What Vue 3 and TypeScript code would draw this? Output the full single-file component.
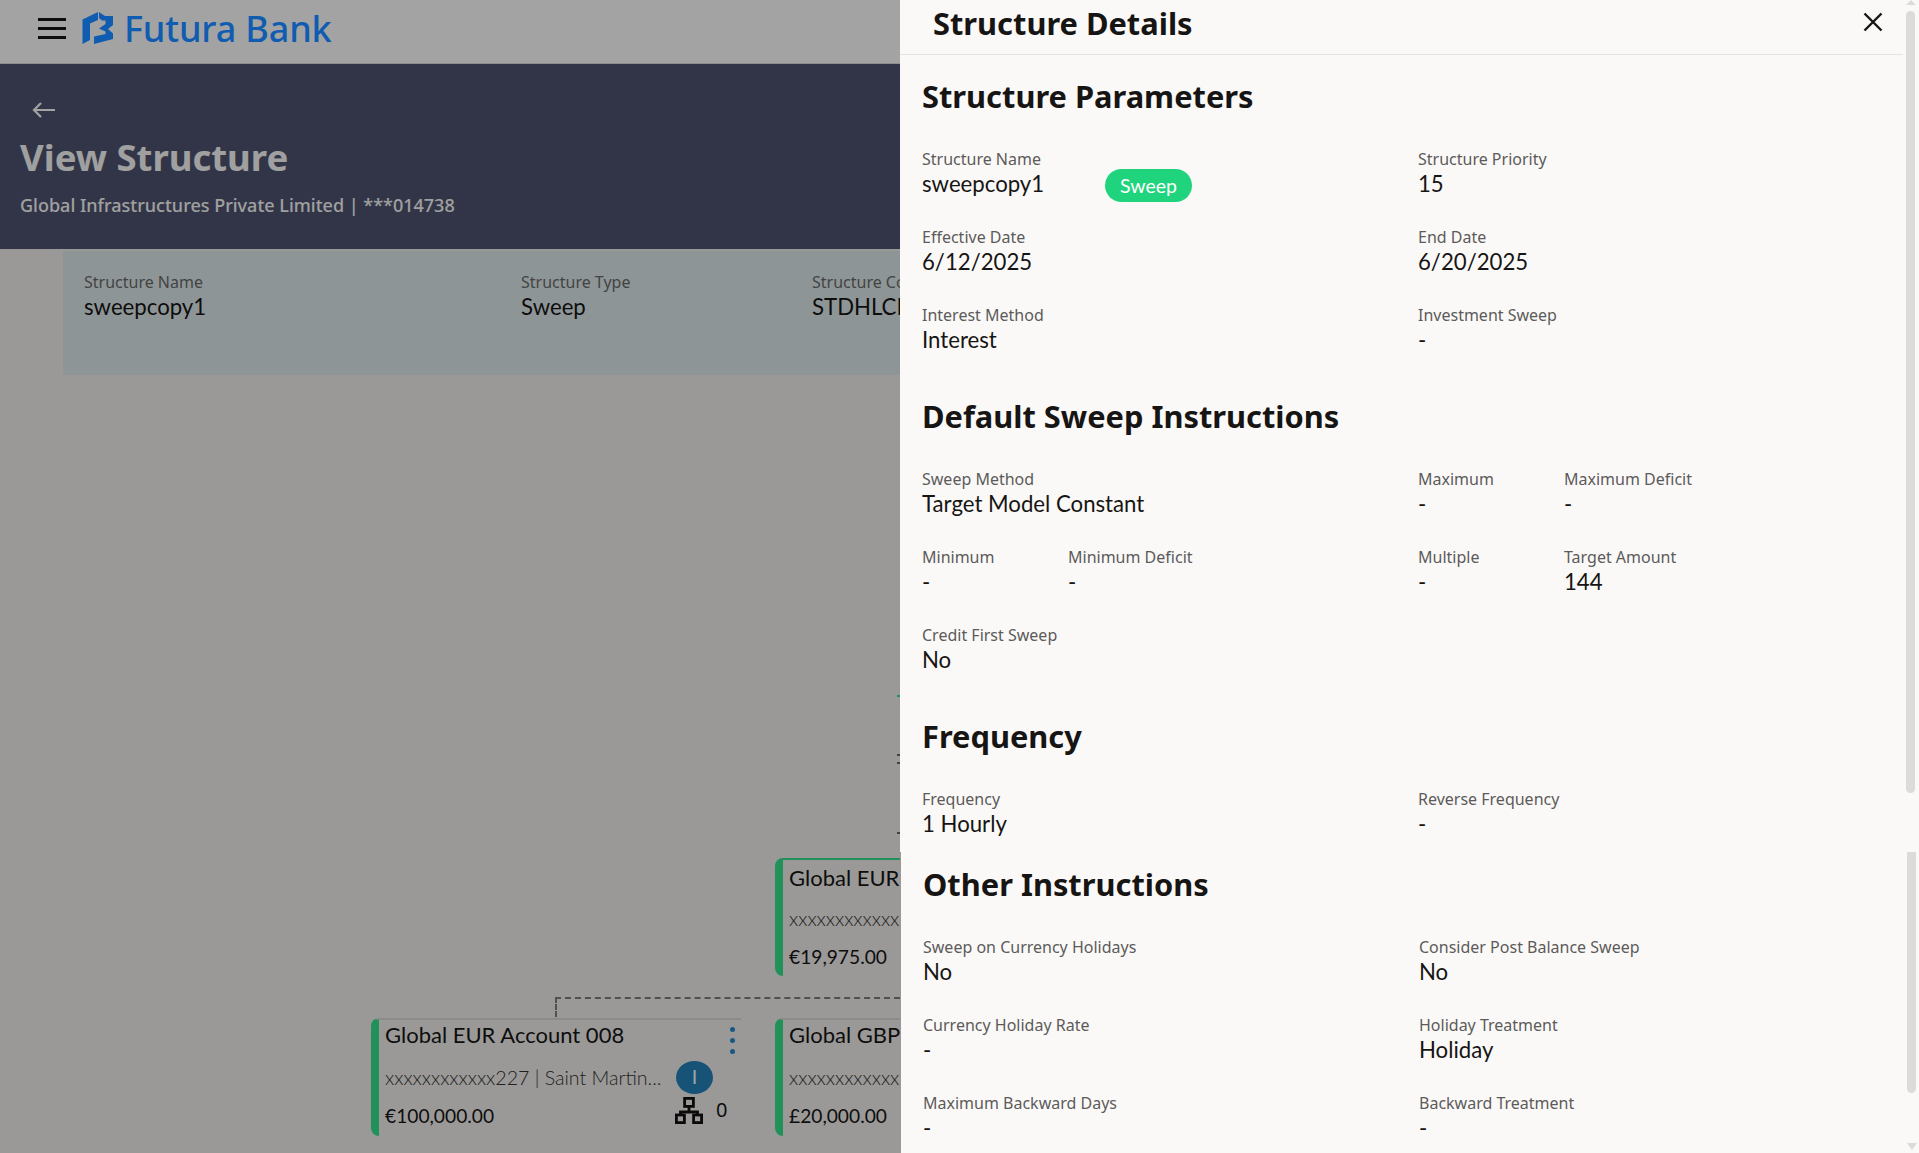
<script setup lang="ts">
interface Field {
  label: string
  value: string
  span?: boolean
  badge?: string
}

interface Section {
  title: string
  fields: Field[]
  mod?: string
}

const sections: Section[] = [
  {
    title: 'Structure Parameters',
    fields: [
      { label: 'Structure Name', value: 'sweepcopy1', span: true, badge: 'Sweep' },
      { label: 'Structure Priority', value: '15', span: true },
      { label: 'Effective Date', value: '6/12/2025', span: true },
      { label: 'End Date', value: '6/20/2025', span: true },
      { label: 'Interest Method', value: 'Interest', span: true },
      { label: 'Investment Sweep', value: '-', span: true },
    ],
  },
  {
    title: 'Default Sweep Instructions',
    fields: [
      { label: 'Sweep Method', value: 'Target Model Constant', span: true },
      { label: 'Maximum', value: '-' },
      { label: 'Maximum Deficit', value: '-' },
      { label: 'Minimum', value: '-' },
      { label: 'Minimum Deficit', value: '-' },
      { label: 'Multiple', value: '-' },
      { label: 'Target Amount', value: '144' },
      { label: 'Credit First Sweep', value: 'No', span: true },
    ],
  },
  {
    title: 'Frequency',
    mod: 'block--tight',
    fields: [
      { label: 'Frequency', value: '1 Hourly', span: true },
      { label: 'Reverse Frequency', value: '-', span: true },
    ],
  },
  {
    title: 'Other Instructions',
    mod: 'block--shift',
    fields: [
      { label: 'Sweep on Currency Holidays', value: 'No', span: true },
      { label: 'Consider Post Balance Sweep', value: 'No', span: true },
      { label: 'Currency Holiday Rate', value: '-', span: true },
      { label: 'Holiday Treatment', value: 'Holiday', span: true },
      { label: 'Maximum Backward Days', value: '-', span: true },
      { label: 'Backward Treatment', value: '-', span: true },
    ],
  },
]

const summary = [
  { label: 'Structure Name', value: 'sweepcopy1' },
  { label: 'Structure Type', value: 'Sweep' },
  { label: 'Structure Code', value: 'STDHLCPF' },
]
</script>

<template>
  <div class="page">
    <header class="topbar">
      <span class="burger"><i /><i /><i /></span>
      <svg class="logo" viewBox="0 0 32 33" width="32" height="33" fill="#0f5cb0">
        <path d="M0.5 7.5L16 0V8L8 11.5V28L0.5 32Z" />
        <path d="M17 0L23 4H31V13L26 17L31 21.5V27L12 32V24.5L23.5 22V19.5L17 16.5L23.5 12V8.5H20L17 6Z" />
      </svg>
      <span class="brand">Futura Bank</span>
    </header>

    <section class="band">
      <svg class="back" width="24" height="16" viewBox="0 0 24 16" fill="none" stroke="#fff" stroke-width="2.2">
        <path d="M23 8H2M9 1L2 8l7 7" />
      </svg>
      <h1>View Structure</h1>
      <p>Global Infrastructures Private Limited | ***014738</p>
    </section>

    <section class="summary">
      <div v-for="s in summary" :key="s.label" class="sum-item">
        <div class="sum-label">{{ s.label }}</div>
        <div class="sum-value">{{ s.value }}</div>
      </div>
    </section>

    <!-- tree nodes sit on a free canvas -->
    <div class="link-h" />
    <div class="link-v" />
    <i class="tick tick-green" />
    <i class="tick tick-a" />
    <i class="tick tick-b" />
    <i class="tick tick-c" />

    <div class="node node-top">
      <div class="node-title">Global EUR</div>
      <div class="node-acc">xxxxxxxxxxxxx</div>
      <div class="node-amt">€19,975.00</div>
    </div>
    <div class="node node-left">
      <div class="node-title">Global EUR Account 008</div>
      <div class="node-acc">xxxxxxxxxxxx227 | Saint Martin...</div>
      <div class="node-amt">€100,000.00</div>
      <span class="dots"><i /><i /><i /></span>
      <span class="badge-i">I</span>
      <svg class="org" width="28" height="27" viewBox="0 0 28 27" fill="none" stroke="#111" stroke-width="2.8">
        <rect x="9.6" y="1.4" width="8.8" height="8" />
        <path d="M14 9v6M5.5 19v-4h17v4" />
        <rect x="1.4" y="18" width="8" height="7.6" />
        <rect x="18.6" y="18" width="8" height="7.6" />
      </svg>
      <span class="org-count">0</span>
    </div>
    <div class="node node-right">
      <div class="node-title">Global GBP</div>
      <div class="node-acc">xxxxxxxxxxxxx</div>
      <div class="node-amt">£20,000.00</div>
    </div>

    <div class="scrim" />
    <div class="edge" />

    <aside class="panel">
      <div class="panel-head">
        <h2>Structure Details</h2>
        <svg class="close" width="20" height="20" viewBox="0 0 20 20" fill="none" stroke="#161513" stroke-width="2.4">
          <path d="M1.5 1.5l17 17M18.5 1.5l-17 17" />
        </svg>
      </div>
      <div class="panel-body">
        <section v-for="sec in sections" :key="sec.title" class="block" :class="sec.mod">
          <h3>{{ sec.title }}</h3>
          <div class="fields">
            <div v-for="f in sec.fields" :key="f.label" class="field" :class="{ 'field--wide': f.span }">
              <div class="f-label">{{ f.label }}</div>
              <div class="f-value">{{ f.value }}</div>
              <span v-if="f.badge" class="pill">{{ f.badge }}</span>
            </div>
          </div>
        </section>
      </div>
      <i class="sb-arrow sb-arrow--up" />
      <i class="sb-thumb sb-thumb--a" />
      <i class="sb-thumb sb-thumb--b" />
      <i class="sb-arrow sb-arrow--down" />
    </aside>
  </div>
</template>

<style>
html, body { margin: 0; overflow: hidden; }
</style>

<style scoped>
.page {
  position: relative;
  width: 1919px;
  height: 1153px;
  overflow: hidden;
  background: #f1f0ee;
  font-family: "Noto Sans", "Open Sans", sans-serif;
  color: #161513;
}
.topbar {
  height: 63px;
  box-sizing: content-box;
  display: flex;
  align-items: center;
  padding-left: 38px;
  background: #ffffff;
  border-bottom: 1px solid #ddd;
}
.burger { display: flex; flex-direction: column; gap: 6px; width: 28px; margin-top: -7px; }
.burger i { display: block; height: 3px; background: #161513; }
.logo { margin-left: 16px; margin-top: -7px; position: relative; z-index: 2; }
.brand {
  position: relative;
  z-index: 2;
  margin: -7px 0 0 10px;
  font-size: 36px;
  font-weight: 500;
  color: #0f5cb0;
  letter-spacing: -0.15px;
}

.band {
  height: 185px;
  box-sizing: border-box;
  padding: 38px 20px 0;
  background: #4f5470;
  color: #fff;
}
.back { display: block; margin-left: 12px; }
.band h1 { margin: 13px 0 0; font-size: 36.5px; line-height: 52px; font-weight: 700; color: #fbfbfb; }
.band p { margin: 8px 0 0; font-size: 18px; line-height: 28px; font-weight: 500; color: #fbfbfb; }

.summary {
  margin: 2px 0 0 63px;
  width: 837px;
  height: 124px;
  overflow: hidden;
  box-sizing: border-box;
  padding: 21px 0 0 21px;
  display: grid;
  grid-template-columns: 437px 291px 1fr;
  background: #dfeaec;
  white-space: nowrap;
}
.sum-label { font-size: 16px; line-height: 21px; color: #6a6a6a; }
.sum-value { font-family: Lato, "Noto Sans", sans-serif; font-size: 22.2px; line-height: 28px; }

.link-h { position: absolute; left: 555px; top: 997px; width: 345px; border-top: 2px dashed #7d7d7d; }
.link-v { position: absolute; left: 555px; top: 997px; height: 20px; border-left: 2px dashed #7d7d7d; }
.tick { position: absolute; display: block; width: 3px; height: 2px; background: #5a6b7a; left: 897px; }
.tick-green { top: 695px; background: #34e38d; }
.tick-a { top: 754px; }
.tick-b { top: 762px; }
.tick-c { top: 832px; }

.node {
  position: absolute;
  height: 118px;
  box-sizing: border-box;
  border-left: 8px solid #34e38d;
  border-top: 2px solid #d9d9d9;
  border-radius: 8px 0 0 8px;
  padding-left: 6px;
  white-space: nowrap;
  overflow: hidden;
  font-family: Lato, "Noto Sans", sans-serif;
}
.node-top { left: 775px; top: 858px; width: 125px; border-top-color: #34e38d; }
.node-left { left: 371px; top: 1018px; width: 370px; overflow: visible; }
.node-right { left: 775px; top: 1018px; width: 125px; }
.node-title { font-size: 22px; line-height: 30px; }
.node-acc { font-size: 19.6px; line-height: 28px; margin-top: 14px; font-weight: 300; color: #333; }
.node-amt { font-size: 19.2px; line-height: 28px; margin-top: 10px; }
.node-top .node-title { margin-top: 3px; }
.node-top .node-acc { margin-top: 12px; }
.dots { position: absolute; left: 351px; top: 7px; display: flex; flex-direction: column; gap: 6px; }
.dots i { display: block; width: 5px; height: 5px; border-radius: 50%; background: #2389d0; }
.badge-i {
  position: absolute;
  left: 297px;
  top: 41px;
  width: 37px;
  height: 33px;
  border-radius: 50%;
  background: #2483bb;
  color: #fff;
  font-family: "Liberation Sans", sans-serif;
  font-size: 20px;
  line-height: 33px;
  text-align: center;
}
.org { position: absolute; left: 296px; top: 77px; }
.org-count { position: absolute; left: 337px; top: 76px; font-family: "Noto Sans", sans-serif; font-size: 20px; line-height: 28px; }

.scrim { position: absolute; inset: 0; z-index: 1; background: rgba(0, 0, 0, 0.36); }
.edge { position: absolute; left: 900px; top: 852px; width: 1px; height: 301px; background: #9a9997; z-index: 4; }

.panel {
  position: absolute;
  z-index: 3;
  left: 900px;
  top: 0;
  width: 1019px;
  height: 1153px;
  overflow: hidden;
  background: #fbf9f8;
}
.panel-head {
  height: 55px;
  box-sizing: border-box;
  margin-right: 16px;
  border-bottom: 1px solid #e4e3e1;
  display: flex;
  align-items: center;
  justify-content: space-between;
  padding: 0 20px 8px 33px;
}
.panel-head h2 { margin: 0; font-size: 30.8px; line-height: 40px; font-weight: 700; }
.close { margin-top: -3px; }

.panel-body { padding: 8px 0 0 22px; }
.block h3 { margin: 0; padding-top: 12px; font-size: 30.8px; line-height: 42px; font-weight: 700; }
.block--tight { margin-bottom: -16px; }
.block--shift { margin-left: 1px; }
.fields {
  display: grid;
  grid-template-columns: 146px 350px 146px 351px;
  margin-top: 32px;
}
.field { position: relative; height: 78px; }
.field--wide { grid-column: span 2; }
.f-label { font-size: 16px; line-height: 21px; color: #5c5b5a; }
.f-value { font-family: Lato, "Noto Sans", sans-serif; font-size: 22.2px; line-height: 28px; }
.pill {
  position: absolute;
  left: 183px;
  top: 20px;
  width: 87px;
  height: 33px;
  border-radius: 17px;
  background: #20d47e;
  color: #fff;
  font-family: Lato, "Noto Sans", sans-serif;
  font-size: 19.5px;
  line-height: 33px;
  text-align: center;
}

.sb-thumb { position: absolute; display: block; width: 9px; background: #dcdbda; border-radius: 0 0 5px 5px; }
.sb-thumb--a { left: 1006px; top: 11px; height: 782px; border-radius: 5px; }
.sb-thumb--b { left: 1007px; top: 852px; height: 241px; }
.sb-arrow { position: absolute; display: block; width: 0; height: 0; border-left: 5px solid transparent; border-right: 5px solid transparent; }
.sb-arrow--up { left: 1006px; top: 0; border-bottom: 5px solid #dcdbda; }
.sb-arrow--down { left: 1007px; top: 1143px; border-top: 7px solid #dcdbda; }
</style>
